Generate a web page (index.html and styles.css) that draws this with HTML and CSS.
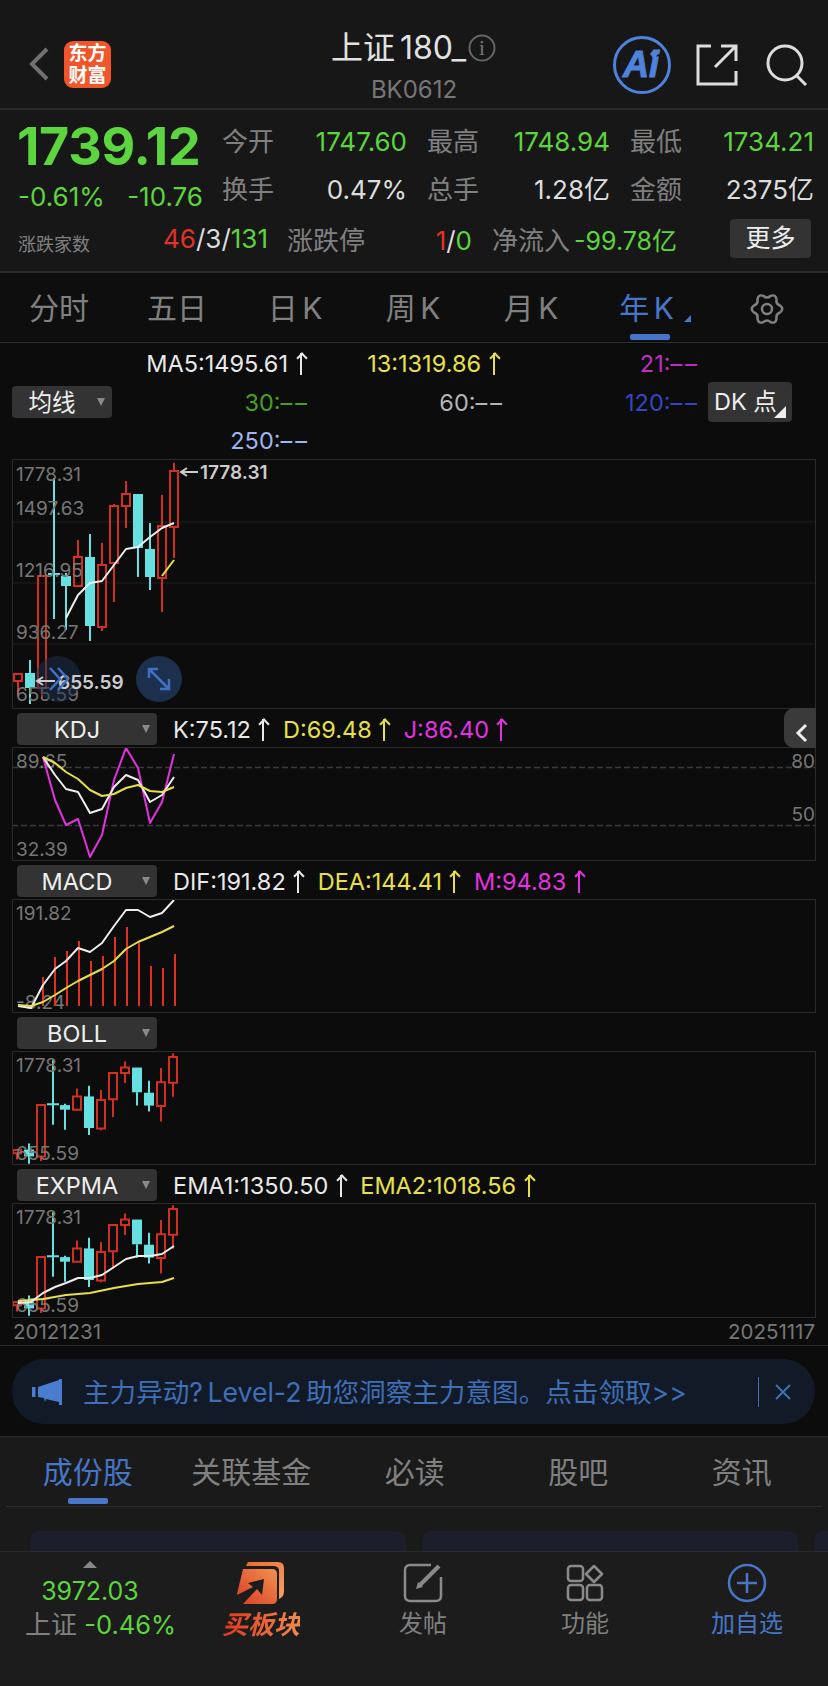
FILE: index.html
```html
<!DOCTYPE html>
<html>
<head>
    <title>上证180</title>
    <link rel="stylesheet" href="styles.css">
</head>
<body>
    <header class="topbar">
        <div class="topbar-left">
            <svg class="back" width="26" height="40" viewBox="0 0 26 40"><path d="M20 5 L5 20 L20 35"/></svg>
            <div class="logo">东方<br>财富</div>
        </div>
        <div class="title-box">
            <div class="title"><span>上证</span><span class="title-num">180_</span>
                <svg width="30" height="30" viewBox="0 0 30 30"><circle cx="15" cy="15" r="12.5"/><text x="15" y="22" text-anchor="middle">i</text></svg>
            </div>
            <div class="code">BK0612</div>
        </div>
        <div class="topbar-right">
            <svg width="62" height="62" viewBox="0 0 62 62">
                <circle cx="31" cy="31" r="27.5" fill="none" stroke="#4f82dc" stroke-width="3"/>
                <text class="ai-text" x="30" y="43">Ai</text>
                <path d="M43 15 L47 20 L43 25 L39 20Z" fill="#4f82dc"/>
            </svg>
            <svg class="line-icon ext" width="42" height="42" viewBox="0 0 42 42"><path d="M15 2H2V40H40V27M19 23L39 3M25 2H40V17"/></svg>
            <svg class="line-icon search" width="42" height="42" viewBox="0 0 42 42"><circle cx="19" cy="19" r="17"/><path d="M31 32L40 41"/></svg>
        </div>
    </header>

    <section class="quote">
        <div class="quote-top">
            <div class="price-box">
                <div class="price">1739.12</div>
                <div class="change"><span>-0.61%</span><span>-10.76</span></div>
            </div>
            <div class="stat-grid">
                <div class="stat"><label>今开</label><b class="green">1747.60</b></div>
                <div class="stat"><label>最高</label><b class="green">1748.94</b></div>
                <div class="stat"><label>最低</label><b class="green">1734.21</b></div>
                <div class="stat"><label>换手</label><b>0.47%</b></div>
                <div class="stat"><label>总手</label><b>1.28亿</b></div>
                <div class="stat"><label>金额</label><b>2375亿</b></div>
            </div>
        </div>
        <div class="quote-bottom">
            <div class="updown"><small>涨跌家数</small><b><i class="red">46</i>/3/<i class="green">131</i></b></div>
            <div class="limit"><label>涨跌停</label><b><i class="red">1</i>/<i class="green">0</i></b></div>
            <div class="flow-in"><label>净流入</label><b class="green">-99.78亿</b></div>
            <div class="more">更多</div>
        </div>
    </section>

    <nav class="periods">
        <a>分时</a><a>五日</a><a>日 K</a><a>周 K</a><a>月 K</a>
        <a class="active">年 K<em></em></a>
        <a><svg width="36" height="34" viewBox="0 0 36 34"><path class="gear" d="M31.040 13.510 Q35.500 17 31.040 20.490 Q26.660 22 27.550 26.550 Q26.750 32.160 21.490 30.040 Q18 27 14.510 30.040 Q9.250 32.160 8.450 26.550 Q9.340 22 4.960 20.490 Q.5 17 4.960 13.510 Q9.340 12 8.450 7.450 Q9.250 1.840 14.510 3.960 Q18 7 21.490 3.960 Q26.750 1.840 27.550 7.450 Q26.660 12 31.040 13.510Z"/><circle class="gear" cx="18" cy="17" r="5"/></svg></a>
    </nav>

    <main class="charts">
        <div class="legend">
            <div class="select select-ma">均线</div>
            <span class="ma ma1 c-white">MA5:1495.61<i class="arr"></i></span>
            <span class="ma ma2 c-yellow">13:1319.86<i class="arr"></i></span>
            <span class="ma ma3 c-purple">21:<i class="na">––</i></span>
            <span class="ma ma4 c-green">30:<i class="na">––</i></span>
            <span class="ma ma5 c-grey">60:<i class="na">––</i></span>
            <span class="ma ma6 c-blue">120:<i class="na">––</i></span>
            <span class="ma ma7 c-sky">250:<i class="na">––</i></span>
            <div class="dk">DK 点<em></em></div>
        </div>

        <svg class="frame" width="804" height="250" viewBox="13 460 802 248">
            <path class="grid-line" d="M12 522H816M12 583H816M12 644H816"/>
            <g id="candles">
                <g class="up">
                    <path d="M18 681V695M42 688V698M78 540V557M102 543V565M102 627V631M114 504V506M114 563V602M126 481V494M126 506V528M162 495V526M162 578V612M174 463V471M174 527V558"/>
                    <rect x="14" y="674" width="8" height="7"/>
                    <rect x="38" y="576" width="8" height="112"/>
                    <rect x="74" y="557" width="8" height="29"/>
                    <rect x="98" y="565" width="8" height="62"/>
                    <rect x="110" y="506" width="8" height="57"/>
                    <rect x="122" y="494" width="8" height="12"/>
                    <rect x="158" y="526" width="8" height="52"/>
                    <rect x="170" y="471" width="8" height="56"/>
                </g>
                <g class="down">
                    <path d="M30 660V704M54 478V619M66 573V630M90 534V641M138 548V577M150 523V590M48 574H60"/>
                    <rect x="25" y="673" width="10" height="15"/>
                    <rect x="61" y="576" width="10" height="10"/>
                    <rect x="85" y="557" width="10" height="69"/>
                    <rect x="133" y="494" width="10" height="54"/>
                    <rect x="145" y="549" width="10" height="28"/>
                </g>
            </g>
            <polyline class="ln white" points="66,618 78,595 90,583 102,581 114,565 126,549 138,547 150,537 162,528 174,523"/>
            <polyline class="ln yellow" points="162,576 174,560"/>
            <text class="axis" x="16" y="481">1778.31</text>
            <text class="axis" x="16" y="515">1497.63</text>
            <text class="axis" x="16" y="577">1216.95</text>
            <text class="axis" x="16" y="639">936.27</text>
            <text class="axis" x="16" y="701">655.59</text>
            <path class="peak-arrow" d="M198 472H181M187 468L181 472L187 476"/>
            <text class="peak" x="200" y="479">1778.31</text>
            <circle cx="58" cy="679" r="23" fill="#1c2f4d" opacity=".5"/>
            <path class="peak-arrow" d="M55 681H37M43 677L37 681L43 685"/>
            <text class="peak" x="58" y="689">655.59</text>
            <path class="blue-stroke" d="M50 668L60 679L50 690M58 668L68 679L58 690"/>
            <circle cx="159" cy="679" r="23" fill="#1c2f4d"/>
            <path class="blue-stroke" d="M150 670L168 688M149 678V669H158M169 679V689H160"/>
        </svg>

        <div class="indicator">
            <div class="select">KDJ</div>
            <span class="c-white">K:75.12<i class="arr"></i></span>
            <span class="c-yellow">D:69.48<i class="arr"></i></span>
            <span class="c-pink">J:86.40<i class="arr"></i></span>
            <div class="collapse"><svg width="14" height="20" viewBox="0 0 14 20"><path d="M11 2L3 10L11 18"/></svg></div>
        </div>
        <svg class="frame" width="804" height="114" viewBox="13 748 802 112">
            <path class="dash-line" d="M12 767.500H816M12 825.500H816"/>
            <text class="axis" x="16" y="768">89.65</text>
            <text class="axis" x="16" y="856">32.39</text>
            <text class="axis end" x="815" y="768">80</text>
            <text class="axis end" x="815" y="821">50</text>
            <polyline class="ln pink" points="43,757 55,800 66,825 78,819 90,857 102,835 114,780 126,748 138,768 150,823 162,802 174,754"/>
            <polyline class="ln white" points="43,757 55,775 66,789 78,792 90,813 102,809 114,787 126,775 138,780 150,802 162,795 174,777"/>
            <polyline class="ln yellow" points="43,757 55,763 66,772 78,779 90,790 102,796 114,794 126,788 138,785 150,791 162,792 174,787"/>
        </svg>

        <div class="indicator">
            <div class="select">MACD</div>
            <span class="c-white">DIF:191.82<i class="arr"></i></span>
            <span class="c-yellow">DEA:144.41<i class="arr"></i></span>
            <span class="c-pink">M:94.83<i class="arr"></i></span>
        </div>
        <svg class="frame" width="804" height="114" viewBox="13 900 802 112">
            <text class="axis" x="16" y="920">191.82</text>
            <text class="axis" x="16" y="1009">-8.24</text>
            <path class="bars" d="M43 1006V977M55 1006V957M67 1006V951M79 1006V941M91 1006V961M103 1006V956M115 1006V937M127 1006V927M139 1006V943M151 1006V966M163 1006V968M175 1006V954"/>
            <polyline class="ln white" points="18,1006 31,1008 43,985 55,969 66,961 78,948 90,952 102,943 114,926 126,910 138,910 150,917 162,913 174,900"/>
            <polyline class="ln yellow" points="18,1005 31,1006 43,1002 55,995 66,988 78,981 90,975 102,969 114,961 126,949 138,942 150,937 162,932 174,926"/>
        </svg>

        <div class="indicator">
            <div class="select">BOLL</div>
        </div>
        <svg class="frame" width="804" height="114" viewBox="13 1052 802 112">
            <use href="#candles" transform="translate(-1 841.300) scale(1 .458)"/>
            <text class="axis" x="16" y="1072">1778.31</text>
            <text class="axis" x="16" y="1160">655.59</text>
        </svg>

        <div class="indicator">
            <div class="select">EXPMA</div>
            <span class="c-white">EMA1:1350.50<i class="arr"></i></span>
            <span class="c-yellow">EMA2:1018.56<i class="arr"></i></span>
        </div>
        <svg class="frame" width="804" height="115" viewBox="13 1204 802 113">
            <use href="#candles" transform="translate(-1 993.300) scale(1 .458)"/>
            <text class="axis" x="16" y="1224">1778.31</text>
            <text class="axis" x="16" y="1312">655.59</text>
            <polyline class="ln yellow" points="18,1301 43,1299 66,1295 90,1293 114,1288 138,1284 162,1282 174,1278"/>
            <polyline class="ln white" points="18,1303 31,1302 43,1293 55,1287 66,1283 78,1278 90,1278 102,1275 114,1267 126,1259 138,1256 150,1256 162,1254 174,1246"/>
        </svg>
        <div class="dates"><span>20121231</span><span>20251117</span></div>

        <div class="notice">
            <svg width="30" height="26" viewBox="0 0 30 26"><path d="M0 8H3.500V18H0ZM6 8L27 1V0H30V26H27V23L14 20L13 23L12 19L6 18Z" fill="#4a7dcf"/></svg>
            <p>主力异动? Level-2 助您洞察主力意图。点击领取&gt;&gt;</p>
            <div class="notice-close"><svg width="16" height="16" viewBox="0 0 16 16"><path d="M1 1L15 15M15 1L1 15"/></svg></div>
        </div>
    </main>

    <section class="sub">
        <nav class="sub-tabs">
            <a class="active">成份股</a><a>关联基金</a><a>必读</a><a>股吧</a><a>资讯</a>
        </nav>
        <div class="cards"><div></div><div></div><div></div></div>
    </section>

    <footer class="bottom">
        <div class="b-index">
            <em></em>
            <div class="b-value">3972.03</div>
            <div class="b-name">上证 <span>-0.46%</span></div>
        </div>
        <div class="b-item b-buy">
            <svg width="50" height="44" viewBox="0 0 50 44">
                <defs>
                    <linearGradient id="buyFront" x1="0" y1="1" x2="1" y2="0"><stop offset="0" stop-color="#d93d25"/><stop offset="1" stop-color="#f0914f"/></linearGradient>
                    <linearGradient id="buyBack" x1="0" y1="0" x2="1" y2="1"><stop offset="0" stop-color="#ea6a38"/><stop offset="1" stop-color="#f4a360"/></linearGradient>
                </defs>
                <path d="M12 1H42Q48 1 48 7V30Q48 36 43 38V10Q43 5 37 5H10Z" fill="url(#buyBack)"/>
                <path d="M7 8H36Q41 8 41 13V38Q41 43 36 43H7L1 33Z" fill="url(#buyFront)"/>
                <path d="M12 22L28 18L26 34L21 28L7 43L1 34L17 26Z" fill="#1c1c1c"/>
            </svg>
            <span>买板块</span>
        </div>
        <div class="b-item">
            <svg width="40" height="40" viewBox="0 0 40 40">
                <path class="b-line" d="M28 2H7C4 2 2 4 2 7V33C2 36 4 38 7 38H33C36 38 38 36 38 33V14"/>
                <path class="b-line thick" d="M17 22L36 3"/>
                <path d="M13 26L15 19L20 24Z" fill="#8a8a8a"/>
            </svg>
            <span>发帖</span>
        </div>
        <div class="b-item">
            <svg width="40" height="40" viewBox="0 0 40 40">
                <rect class="b-line" x="3" y="3" width="15" height="15" rx="3"/>
                <path class="b-line" d="M29 3L37 11L29 19L21 11Z"/>
                <rect class="b-line" x="3" y="22" width="15" height="15" rx="3"/>
                <rect class="b-line" x="22" y="22" width="15" height="15" rx="3"/>
            </svg>
            <span>功能</span>
        </div>
        <div class="b-item b-add">
            <svg width="40" height="40" viewBox="0 0 40 40">
                <circle cx="20" cy="20" r="18"/><path d="M20 10V30M10 20H30"/>
            </svg>
            <span>加自选</span>
        </div>
    </footer>
</body>
</html>
```

FILE: styles.css
```css
* {
    box-sizing: border-box;
}

body {
    margin: 0;
    width: 828px;
    height: 1686px;
    overflow: hidden;
    background-color: #0c0c0c;
    color: #ddd;
    font-family: Inter, "Noto Sans CJK SC", sans-serif;
    font-size: 26px;
}

i, em {
    font-style: normal;
}

b {
    font-weight: normal;
}

.green { color: #5dd53e; }
.red { color: #e03226; }
.c-white { color: #e8e8e8; }
.c-yellow { color: #e8e04a; }
.c-purple { color: #c02ec0; }
.c-pink { color: #e332e0; }
.c-green { color: #45a01e; }
.c-grey { color: #b4b4b4; }
.c-blue { color: #3346c0; }
.c-sky { color: #9db5f2; }

/* top bar */
.topbar {
    height: 110px;
    background-color: #171717;
    border-bottom: 2px solid #2b2b2b;
    display: grid;
    grid-template-columns: 1fr auto 1fr;
    align-items: center;
}

.topbar-left {
    display: flex;
    align-items: center;
    padding: 20px 0 0 27px;
    gap: 11px;
}

.back path {
    fill: none;
    stroke: #707070;
    stroke-width: 4;
}

.logo {
    width: 47px;
    height: 47px;
    background-color: #f0562a;
    border-radius: 9px;
    color: #fff;
    font-size: 19px;
    font-weight: bold;
    line-height: 22px;
    text-align: center;
    padding-top: 2px;
}

.title-box {
    text-align: center;
    padding-top: 23px;
}

.title {
    display: flex;
    align-items: center;
    color: #e2e2e2;
    font-size: 32px;
    line-height: 42px;
}

.title-num {
    margin-left: 5px;
}

.title svg {
    margin-left: 1px;
}

.title circle {
    fill: none;
    stroke: #666;
    stroke-width: 2;
}

.title text {
    fill: #777;
    font-family: "Liberation Serif", serif;
    font-size: 21px;
}

.code {
    color: #777;
    font-size: 24px;
    line-height: 30px;
    margin-top: 6px;
}

.topbar-right {
    display: flex;
    align-items: center;
    justify-content: flex-end;
    padding: 22px 20px 0 0;
}

.ai-text {
    fill: #4f82dc;
    stroke: #4f82dc;
    stroke-width: 1;
    font-size: 36px;
    font-weight: bold;
    font-style: italic;
    text-anchor: middle;
    font-family: "Liberation Sans", sans-serif;
}

.line-icon {
    fill: none;
    stroke: #ddd;
    stroke-width: 3;
}

.ext {
    margin-left: 23px;
}

.search {
    margin-left: 28px;
}

/* quote block */
.quote {
    height: 163px;
    background-color: #171717;
    border-bottom: 2px solid #2b2b2b;
    padding-top: 12px;
}

.quote-top {
    display: flex;
    height: 92px;
}

.price-box {
    width: 222px;
    padding-left: 17px;
}

.price {
    color: #5dd53e;
    font-weight: bold;
    font-size: 52px;
    letter-spacing: -.3px;
    line-height: 50px;
    white-space: nowrap;
}

.change {
    display: flex;
    justify-content: space-between;
    width: 185px;
    margin-left: 1px;
    color: #5dd53e;
    margin-top: 10px;
    font-size: 26px;
    line-height: 30px;
}

.stat-grid {
    display: grid;
    grid-template-columns: 185px 183px 184px;
    column-gap: 20px;
    grid-auto-rows: 48px;
    line-height: 40px;
}

.stat {
    display: flex;
    justify-content: space-between;
}

.flow-in b {
    font-size: 25px;
}

.stat label, .limit label, .flow-in label {
    color: #808080;
}

.quote-bottom {
    display: flex;
    align-items: center;
    height: 48px;
    padding: 0 17px 0 18px;
}

.updown {
    display: flex;
    justify-content: space-between;
    align-items: center;
    width: 250px;
}

.updown small {
    color: #808080;
    font-size: 18px;
    padding-top: 9px;
}

.limit {
    display: flex;
    justify-content: space-between;
    align-items: baseline;
    width: 185px;
    margin-left: 19px;
}

.flow-in {
    display: flex;
    align-items: baseline;
    gap: 4px;
    margin-left: 20px;
}

.more {
    width: 81px;
    height: 39px;
    line-height: 38px;
    margin-left: auto;
    background-color: #333;
    border-radius: 4px;
    text-align: center;
    color: #eee;
    font-size: 25px;
}

/* period tabs */
.periods {
    height: 70px;
    background-color: #0e0e0e;
    border-bottom: 1px solid #2b2b2b;
    display: grid;
    grid-template-columns: repeat(7, 118px);
    align-items: center;
    text-align: center;
    color: #808080;
    font-size: 30px;
    line-height: 70px;
    word-spacing: -4px;
}

.periods a {
    position: relative;
    height: 69px;
}

.periods svg {
    vertical-align: middle;
    margin-top: -4px;
}

.gear {
    fill: none;
    stroke: #808080;
    stroke-width: 2.500;
    stroke-linejoin: round;
}

.periods .active {
    color: #4776c8;
    padding-right: 5px;
}

.periods .active em {
    position: absolute;
    left: 40px;
    bottom: 2px;
    width: 40px;
    height: 6px;
    border-radius: 2px;
    background-color: #4776c8;
}

.periods .active::after {
    content: "";
    position: absolute;
    left: 94px;
    top: 42px;
    border-style: solid;
    border-width: 0 0 7px 7px;
    border-color: transparent transparent #4776c8 transparent;
}

/* chart area */
.charts {
    height: 1093px;
    background-color: #0c0c0c;
    position: relative;
}

.legend {
    height: 116px;
    padding-left: 12px;
    display: grid;
    grid-template-columns: 103px 195px 195px 195px 92px;
    grid-template-rows: 40px 38px 38px;
    align-items: center;
    font-size: 23.500px;
}

.ma {
    text-align: right;
}

.ma1 {
    padding-right: 5px;
}

.ma2 {
    padding-right: 7px;
}

.na {
    letter-spacing: 3px;
}

.arr {
    display: inline-block;
    position: relative;
    width: 9px;
    height: 22px;
    margin-left: 8px;
    vertical-align: -3px;
    background: linear-gradient(currentColor, currentColor) center / 2px 100% no-repeat;
}

.arr::before {
    content: "";
    position: absolute;
    left: 1.500px;
    top: 1px;
    width: 6px;
    height: 6px;
    border-top: 2px solid currentColor;
    border-left: 2px solid currentColor;
    transform: rotate(45deg);
}

.ma1 { grid-area: 1 / 2; }
.ma2 { grid-area: 1 / 3; }
.ma3 { grid-area: 1 / 4; }
.ma4 { grid-area: 2 / 2; }
.ma5 { grid-area: 2 / 3; }
.ma6 { grid-area: 2 / 4; }
.ma7 { grid-area: 3 / 2; }

.select {
    position: relative;
    width: 140px;
    height: 32px;
    padding-right: 20px;
    background-color: #333;
    border-radius: 4px;
    color: #eee;
    text-align: center;
    font-size: 23.500px;
    line-height: 33px;
}

.select::after {
    content: "";
    position: absolute;
    right: 7px;
    top: 12px;
    border-style: solid;
    border-width: 8px 4.500px 0 4.500px;
    border-color: #8a8a8a transparent transparent transparent;
}

.select-ma {
    grid-area: 2 / 1;
    width: 100px;
}

.dk {
    grid-area: 2 / 5;
    position: relative;
    width: 84px;
    height: 40px;
    margin-left: 8px;
    padding-left: 6px;
    background-color: #333;
    border-radius: 4px;
    color: #eee;
    font-size: 23.500px;
    line-height: 40px;
    white-space: nowrap;
}

.dk em {
    position: absolute;
    right: 6px;
    bottom: 4px;
    border-style: solid;
    border-width: 0 0 12px 12px;
    border-color: transparent transparent #eee transparent;
}

.frame {
    display: block;
    margin-left: 12px;
    border: 1px solid #2b2b2b;
    overflow: hidden;
}

.grid-line {
    stroke: #1e1e1e;
    stroke-width: 1;
    fill: none;
}

.dash-line {
    stroke: #3a3a3a;
    stroke-width: 1.500;
    stroke-dasharray: 6 3;
    fill: none;
}

.axis {
    fill: #777;
    font-size: 19px;
}

.axis.end {
    text-anchor: end;
}

.peak {
    fill: #ccc;
    font-size: 19px;
    font-weight: 600;
}

.peak-arrow {
    fill: none;
    stroke: #ccc;
    stroke-width: 2;
}

.up path, .up rect {
    fill: none;
    stroke: #d22f1e;
    stroke-width: 2;
    vector-effect: non-scaling-stroke;
}

.down path {
    fill: none;
    stroke: #66e0e0;
    stroke-width: 2;
    vector-effect: non-scaling-stroke;
}

.down rect {
    fill: #66e0e0;
}

.ln {
    fill: none;
    stroke-width: 2;
    stroke-linejoin: round;
}

.ln.white { stroke: #eee; }
.ln.yellow { stroke: #e8e04a; }
.ln.pink { stroke: #e332e0; }

.bars {
    stroke: #e0301e;
    stroke-width: 2;
    fill: none;
}

.blue-stroke {
    fill: none;
    stroke: #3f72c4;
    stroke-width: 2.500;
}

.indicator {
    position: relative;
    height: 38px;
    padding: 4px 0 0 17px;
    display: flex;
    gap: 15px;
    font-size: 23.500px;
    line-height: 33px;
    white-space: nowrap;
}

.indicator .select {
    flex: none;
    margin-right: 1px;
}

.collapse {
    position: absolute;
    right: 12px;
    top: -1px;
    width: 32px;
    height: 40px;
    background-color: #3a3a3a;
    border-radius: 10px 0 0 10px;
    padding: 10px 0 0 11px;
}

.collapse path {
    fill: none;
    stroke: #eee;
    stroke-width: 3;
}

.dates {
    display: flex;
    justify-content: space-between;
    height: 28px;
    padding: 0 13px;
    border-bottom: 1px solid #2b2b2b;
    color: #777;
    font-size: 20.500px;
    line-height: 27px;
}

.notice {
    margin: 13px 13px 0 12px;
    height: 65px;
    border-radius: 32px;
    background-color: #121a28;
    color: #3f6fb5;
    display: flex;
    align-items: center;
    padding-left: 20px;
    position: relative;
}

.notice svg {
    flex: none;
}

.notice p {
    margin: 0 0 3px 21px;
    font-size: 26.600px;
    word-spacing: -3px;
    white-space: nowrap;
}

.notice-close {
    position: absolute;
    left: 746px;
    top: 18px;
    height: 30px;
    padding-left: 16px;
    border-left: 1px solid #3f6fb5;
    display: flex;
    align-items: center;
}

.notice-close path {
    fill: none;
    stroke: #3f6fb5;
    stroke-width: 2;
}

/* lower tabs */
.sub {
    height: 115px;
    background-color: #1a1a1a;
    border-top: 1px solid #2b2b2b;
    overflow: hidden;
}

.sub-tabs {
    height: 70px;
    margin: 0 6px;
    border-bottom: 1px solid #2b2b2b;
    display: grid;
    grid-template-columns: repeat(5, 163.500px);
    text-align: center;
    color: #808080;
    font-size: 30px;
    line-height: 70px;
}

.sub-tabs a {
    position: relative;
}

.sub-tabs .active {
    color: #4776c8;
}

.sub-tabs .active::after {
    content: "";
    position: absolute;
    left: 62px;
    bottom: 3px;
    width: 40px;
    height: 6px;
    border-radius: 2px;
    background-color: #4776c8;
}

.cards {
    display: flex;
    gap: 16px;
    padding: 24px 0 0 30px;
}

.cards div {
    flex: none;
    width: 376px;
    height: 30px;
    background-color: #1a1f2b;
    border-radius: 10px 10px 0 0;
}

/* bottom bar */
.bottom {
    height: 135px;
    background-color: #1c1c1c;
    border-top: 1px solid #2b2b2b;
    display: grid;
    grid-template-columns: 180px repeat(4, 162px);
    text-align: center;
    color: #808080;
    font-size: 24px;
}

.b-index {
    padding-top: 9px;
}

.b-index em {
    display: block;
    width: 0;
    margin: 0 auto;
    border-style: solid;
    border-width: 0 7px 7px 7px;
    border-color: transparent transparent #888 transparent;
}

.b-value {
    color: #5dd53e;
    font-size: 25px;
    line-height: 34px;
    margin-top: 6px;
}

.b-name {
    padding-left: 21px;
    font-size: 26px;
    line-height: 34px;
    white-space: nowrap;
}

.b-name span {
    color: #5dd53e;
    font-size: 25.500px;
}

.b-item {
    padding-top: 11px;
    display: flex;
    flex-direction: column;
    align-items: center;
    gap: 4px;
    line-height: 34px;
}

.b-buy {
    padding-top: 9px;
    gap: 3px;
}

.b-buy span {
    font-weight: bold;
    font-size: 26px;
    font-style: italic;
    color: transparent;
    background: linear-gradient(90deg, #e0351f, #f08c4c);
    -webkit-background-clip: text;
    background-clip: text;
}

.b-line {
    fill: none;
    stroke: #8a8a8a;
    stroke-width: 2.500;
    stroke-linejoin: round;
}

.b-line.thick {
    stroke-width: 4;
}

.b-add {
    color: #4776c8;
}

.b-add svg {
    fill: none;
    stroke: #4776c8;
    stroke-width: 2.500;
}
```
